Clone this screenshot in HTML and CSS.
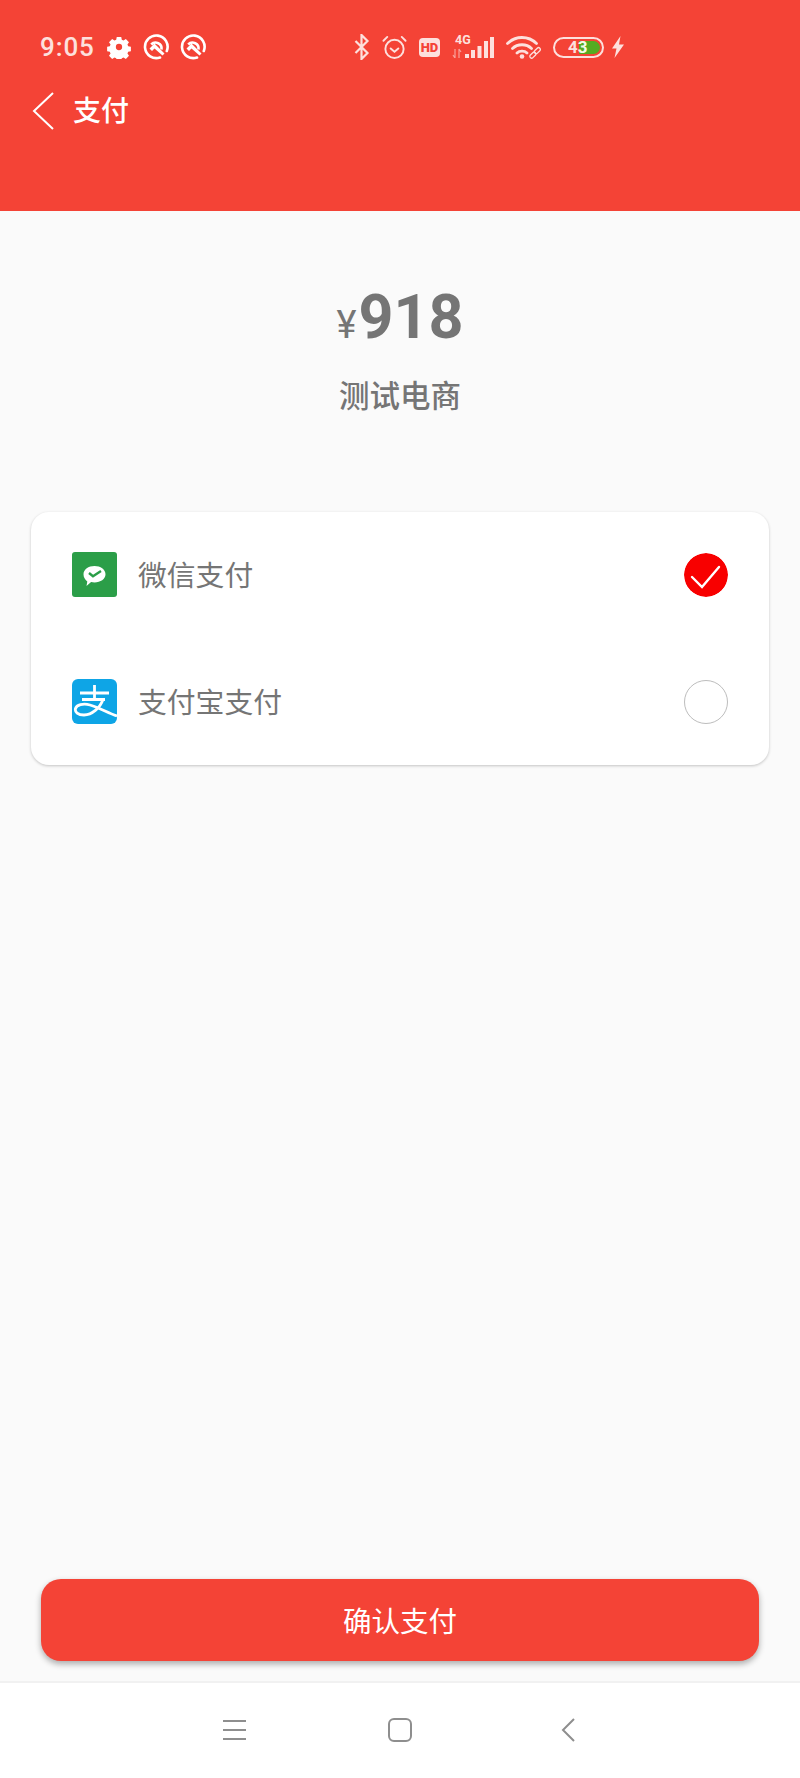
FILE: index.html
```html
<!DOCTYPE html>
<html lang="zh">
<head>
<meta charset="utf-8">
<title>支付</title>
<link rel="stylesheet" href="styles.css">
</head>
<body>
<div class="app">
  <header class="header">
    <div class="status">
      <div class="status-left">
        <span class="time">9:05</span>
        <svg class="ic-gear" viewBox="0 0 24 24"><path fill="#fff" fill-rule="evenodd" d="M9.500 1h5l.6 3 1.900.8 2.600-1.700 3.500 3.500-1.700 2.600.8 1.900 3 .6v5l-3 .6-.8 1.900 1.700 2.600-3.500 3.500-2.600-1.700-1.900.8-.6 3h-5l-.6-3-1.900-.8-2.600 1.700-3.500-3.500 1.700-2.600-.8-1.900-3-.6v-5l3-.6.8-1.900-1.700-2.600 3.500-3.500 2.600 1.700 1.900-.8zM12 8.500a3.500 3.500 0 1 0 0 7 3.500 3.500 0 0 0 0-7z" transform="translate(1.200 1.200) scale(.9)"/></svg>
        <svg class="ic-q" viewBox="0 0 26 26"><g fill="none" stroke="#fff" stroke-width="2.600"><path stroke-linecap="round" d="M17 23.500A11.300 11.300 0 1 1 23.800 17"/><path d="M8.200 10.500A6 6 0 0 1 18.500 15.500"/></g><path fill="#fff" d="M6.500 14.500l5-5 10 10-2 2-8-7-2.500 2.500z"/></svg>
        <svg class="ic-q" viewBox="0 0 26 26"><g fill="none" stroke="#fff" stroke-width="2.600"><path stroke-linecap="round" d="M17 23.500A11.300 11.300 0 1 1 23.800 17"/><path d="M8.200 10.500A6 6 0 0 1 18.500 15.500"/></g><path fill="#fff" d="M6.500 14.500l5-5 10 10-2 2-8-7-2.500 2.500z"/></svg>
      </div>
      <div class="status-right">
        <svg class="ic-bt" viewBox="0 0 16 26"><path fill="none" stroke="#fde0dd" stroke-width="2.200" d="M1.500 7l12 12-6 6V1l6 6-12 12"/></svg>
        <svg class="ic-alarm" viewBox="0 0 26 26"><g fill="none" stroke="#fde0dd" stroke-width="2" stroke-linecap="round"><circle cx="13" cy="14.500" r="9.500"/><path d="M1.500 6l4-4M24.500 6l-4-4M9 14l4 3.500 4-3.500"/></g></svg>
        <span class="hd">HD</span>
        <span class="signal">
          <span class="net">4G</span>
          <svg class="ic-bars" viewBox="0 0 43 21"><g fill="#fde0dd"><rect x="13" y="17" width="4" height="4"/><rect x="19" y="13" width="4" height="8"/><rect x="25.500" y="9" width="4" height="12"/><rect x="32" y="4" width="4" height="17"/><rect x="38" y="0" width="4" height="21"/></g><path stroke="#fde0dd" stroke-opacity=".6" stroke-width="1.200" fill="none" d="M3 12v9M1 18l2 3M7 12v9M7 12l2 3"/></svg>
        </span>
        <svg class="ic-wifi" viewBox="0 0 36 24"><g fill="none" stroke="#fde0dd" stroke-width="2.800" stroke-linecap="round"><path d="M1.500 8.500c8-8 21-8 29 0M6.500 13.500c5-5 14-5 19 0M11 18c2.500-2.500 7.500-2.500 10 0"/></g><circle cx="16" cy="21.500" r="2.300" fill="#fde0dd"/><g fill="none" stroke="#fde0dd" stroke-width="1.300"><rect x="-3" y="-1.800" width="7" height="3.600" rx="1.800" transform="translate(26.500 20.500) rotate(-45)"/><rect x="-3" y="-1.800" width="7" height="3.600" rx="1.800" transform="translate(31 16) rotate(-45)"/></g></svg>
        <span class="battery"><span class="battery-fill"></span><span class="battery-num">4<span class="battery-num-end">3</span></span></span>
        <svg class="ic-bolt" viewBox="0 0 14 22"><path fill="#fde0dd" d="M9.500 0L1 12.500h4.500L3.500 22 13 8.500H8z"/></svg>
      </div>
    </div>
    <div class="nav">
      <svg class="ic-back" viewBox="0 0 22 38"><path fill="none" stroke="#fff" stroke-width="2" d="M21 1L2 19l19 18"/></svg>
      <span class="nav-title">支付</span>
    </div>
  </header>

  <main class="main">
    <div class="amount"><span class="currency">¥</span><span class="value">918</span></div>
    <div class="merchant">测试电商</div>

    <section class="card">
      <div class="row">
        <svg class="pay-icon" viewBox="0 0 45 45"><rect width="45" height="45" rx="3" fill="#2b9e48"/><path fill="#fff" d="M22.500 14c6 0 11 3.500 11 8.300s-5 8.200-11 8.200c-1.200 0-2.300-.2-3.400-.5L14.500 34l.8-4.500c-2.300-1.700-3.800-4.200-3.800-7.200 0-4.800 5-8.300 11-8.300z"/><path fill="none" stroke="#2b9e48" stroke-width="2.400" d="M17 21l4 3.300 8-5.300"/></svg>
        <span class="row-label">微信支付</span>
        <svg class="radio" viewBox="0 0 44 44"><circle cx="22" cy="22" r="22" fill="#f80000"/><path fill="none" stroke="#fff" stroke-width="2.400" stroke-linecap="round" d="M8 24l10 10L35 14"/></svg>
      </div>
      <div class="row">
        <svg class="pay-icon" viewBox="0 0 45 45"><rect width="45" height="45" rx="6" fill="#0ea5e6"/><g fill="none" stroke="#fff" stroke-width="2.800"><path d="M8 14h29M22.500 6v14M10 20.500h23"/><path d="M31 20.500C28 29 20 36 12 36c-6 0-9.500-3-8.500-6.500S11 24 18 26c10 3 18 8 27 11"/></g></svg>
        <span class="row-label">支付宝支付</span>
        <span class="radio radio-empty"></span>
      </div>
    </section>

    <button class="confirm" type="button">确认支付</button>
  </main>

  <footer class="softkeys">
    <svg class="key key-menu" viewBox="0 0 23 22"><path stroke="#8e8e8e" stroke-width="2" d="M0 2h23M0 11h23M0 20h23"/></svg>
    <svg class="key key-home" viewBox="0 0 24 24"><rect x="1" y="1" width="22" height="22" rx="5" fill="none" stroke="#8e8e8e" stroke-width="2"/></svg>
    <svg class="key key-back" viewBox="0 0 14 24"><path fill="none" stroke="#8e8e8e" stroke-width="2" d="M13 1L2 12l11 11"/></svg>
  </footer>
</div>
</body>
</html>
```

FILE: styles.css
```css
* { box-sizing: border-box; }
html, body { margin: 0; padding: 0; }
body {
  font-family: Roboto, "Noto Sans CJK SC", sans-serif;
  background: #fafafa;
}
.app {
  display: flex;
  flex-direction: column;
  width: 800px;
  height: 1778px;
  overflow: hidden;
}

/* Header */
.header {
  flex: none;
  height: 211px;
  background: #f44336;
  padding-top: 32px;
}
.status {
  display: flex;
  align-items: center;
  justify-content: space-between;
  height: 30px;
  padding: 0 175px 0 40px;
}
.status-left, .status-right {
  display: flex;
  align-items: center;
}
.time {
  font-size: 26px;
  font-weight: 500;
  color: #fde0dd;
  width: 67px;
  letter-spacing: .9px;
}
.ic-gear { width: 24px; height: 24px; margin-right: 12px; }
.ic-q { width: 26px; height: 26px; margin-right: 11px; }
.ic-q:last-child { margin-right: 0; }
.ic-bt { width: 16px; height: 26px; margin-right: 12px; }
.ic-alarm { width: 25px; height: 25px; margin-right: 12px; }
.hd {
  width: 21px;
  height: 19px;
  border-radius: 4px;
  background: #fde0dd;
  color: #f44336;
  font-size: 13px;
  font-weight: 900;
  line-height: 19px;
  text-align: center;
  margin-right: 12px;
}
.signal {
  position: relative;
  width: 43px;
  height: 21px;
  margin: 1px 11px 0 0;
}
.net {
  position: absolute;
  left: 3px;
  top: -3px;
  color: #fde0dd;
  font-size: 12.500px;
  font-weight: 700;
  line-height: 12px;
}
.ic-bars { display: block; width: 43px; height: 21px; }
.ic-wifi { width: 36px; height: 24px; margin-right: 11px; }
.battery {
  position: relative;
  width: 51px;
  height: 21px;
  border: 2px solid #fde0dd;
  border-radius: 11px;
  margin-right: 7px;
}
.battery-fill {
  position: absolute;
  right: 2px;
  top: 2px;
  bottom: 2px;
  width: 21px;
  background: #55ab22;
  border-radius: 0 7px 7px 0;
}
.battery-num {
  position: absolute;
  left: 13px;
  top: -1px;
  color: #fde0dd;
  font-size: 17px;
  font-weight: 700;
  line-height: 19px;
}
.battery-num-end { color: #f4fbe8; }
.ic-bolt { width: 14px; height: 22px; }

.nav {
  display: flex;
  align-items: center;
  height: 40px;
  margin-top: 30px;
  padding-left: 32px;
}
.ic-back { width: 22px; height: 38px; margin: -2px 19px 0 0; }
.nav-title {
  font-size: 28px;
  font-weight: 500;
  color: #fff;
  line-height: 40px;
}

/* Main */
.main {
  flex: 1;
  display: flex;
  flex-direction: column;
  align-items: center;
}
.amount {
  display: flex;
  align-items: baseline;
  justify-content: center;
  margin-top: 71px;
  height: 70px;
  line-height: 70px;
  color: #757575;
}
.currency { font-size: 38px; font-weight: 400; margin-right: 2px; }
.value { font-size: 61px; font-weight: 700; }
.merchant {
  margin-top: 23px;
  font-size: 30.500px;
  line-height: 44px;
  font-weight: 500;
  color: #757575;
}

.card {
  width: 738px;
  height: 253px;
  margin-top: 93px;
  padding: 40px 41px 0;
  background: #fff;
  border-radius: 18px;
  box-shadow: 0 1px 3px rgba(0, 0, 0, .22);
}
.row {
  display: flex;
  align-items: center;
  height: 45px;
  margin-bottom: 82px;
}
.pay-icon { width: 45px; height: 45px; flex: none; margin-right: 21px; }
.row-label {
  flex: 1;
  padding-top: 3px;
  font-size: 28.800px;
  line-height: 40px;
  color: #757575;
}
.radio { display: block; width: 44px; height: 44px; flex: none; border-radius: 50%; }
.radio-empty { border: 1px solid #bdbdbd; }

.confirm {
  width: 718px;
  height: 82px;
  margin-top: auto;
  margin-bottom: 20px;
  padding-bottom: 2px;
  border: 0;
  border-radius: 20px;
  background: #f44336;
  color: #fff;
  font-family: inherit;
  font-size: 28.500px;
  box-shadow: 0 3px 6px rgba(0, 0, 0, .32);
}

/* Soft keys */
.softkeys {
  flex: none;
  height: 97px;
  background: #fff;
  border-top: 2px solid #f1f1f1;
  display: flex;
  align-items: center;
  padding: 0 0 2px 223px;
}
.key { display: block; flex: none; }
.key-menu { width: 23px; height: 22px; margin-right: 142px; }
.key-home { width: 24px; height: 24px; margin-right: 149px; }
.key-back { width: 14px; height: 24px; }
```
